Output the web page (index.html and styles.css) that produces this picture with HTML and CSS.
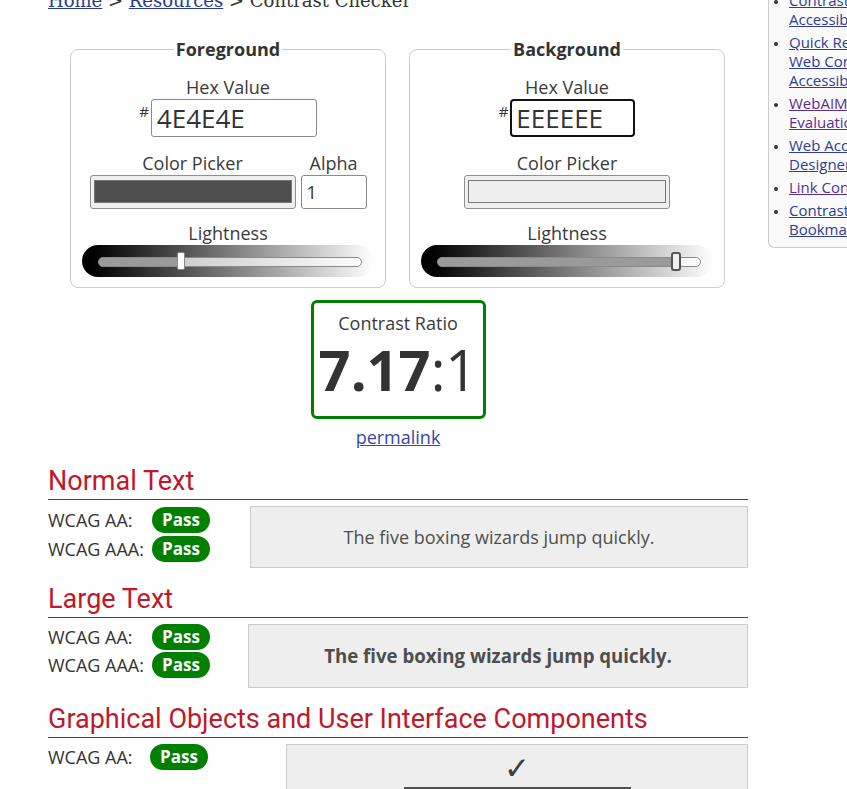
FILE: index.html
```html
<!DOCTYPE html>
<html lang="en">
<head>
<meta charset="utf-8">
<title>Contrast Checker</title>
<link rel="stylesheet" href="styles.css">
</head>
<body>
<div class="page">
  <main class="main">
    <p class="crumbs"><a href="#">Home</a> &gt; <a href="#">Resources</a> &gt; Contrast Checker</p>

    <div class="pickers">
      <fieldset class="picker">
        <legend>Foreground</legend>
        <div class="fs-body">
          <div class="lbl">Hex Value</div>
          <div class="hexrow">
            <span class="hash">#</span>
            <div class="hex">4E4E4E</div>
          </div>
          <div class="pickrow">
            <div class="col">
              <div class="lbl">Color Picker</div>
              <div class="swatch"><div class="swatch-in" style="background:#4e4e4e"></div></div>
            </div>
            <div class="col">
              <div class="lbl">Alpha</div>
              <div class="alpha">1</div>
            </div>
          </div>
          <div class="lbl">Lightness</div>
          <div class="slider">
            <div class="track">
              <div class="fill" style="width:31.4%"></div>
              <div class="thumb" style="left:31.4%"></div>
            </div>
          </div>
        </div>
      </fieldset>

      <fieldset class="picker">
        <legend>Background</legend>
        <div class="fs-body">
          <div class="lbl">Hex Value</div>
          <div class="hexrow">
            <span class="hash">#</span>
            <div class="hex hex-focus">EEEEEE</div>
          </div>
          <div class="pickrow">
            <div class="col">
              <div class="lbl">Color Picker</div>
              <div class="swatch"><div class="swatch-in" style="background:#eeeeee"></div></div>
            </div>
          </div>
          <div class="lbl">Lightness</div>
          <div class="slider">
            <div class="track">
              <div class="fill" style="width:90.9%"></div>
              <div class="thumb thumb-hover" style="left:90.9%"></div>
            </div>
          </div>
        </div>
      </fieldset>
    </div>

    <div class="ratio-wrap">
      <div class="ratio-box">
        <div class="ratio-label">Contrast Ratio</div>
        <div class="ratio-num"><b>7.17</b>:1</div>
      </div>
      <a class="permalink" href="#">permalink</a>
    </div>

    <section class="result first">
      <h2>Normal Text</h2>
      <div class="res-row">
        <div class="grades">
          <div class="grade"><span class="g-label">WCAG AA:</span><span class="pass">Pass</span></div>
          <div class="grade"><span class="g-label">WCAG AAA:</span><span class="pass">Pass</span></div>
        </div>
        <div class="sample">The five boxing wizards jump quickly.</div>
      </div>
    </section>

    <section class="result">
      <h2>Large Text</h2>
      <div class="res-row">
        <div class="grades grades-large">
          <div class="grade"><span class="g-label">WCAG AA:</span><span class="pass">Pass</span></div>
          <div class="grade"><span class="g-label">WCAG AAA:</span><span class="pass">Pass</span></div>
        </div>
        <div class="sample sample-large">The five boxing wizards jump quickly.</div>
      </div>
    </section>

    <section class="result">
      <h2>Graphical Objects and User Interface Components</h2>
      <div class="res-row">
        <div class="grades grades-ui">
          <div class="grade"><span class="g-label g-label-ui">WCAG AA:</span><span class="pass">Pass</span></div>
        </div>
        <div class="sample sample-ui">
          <div class="check">&#10003;</div>
          <div class="ui-bar"></div>
        </div>
      </div>
    </section>
  </main>

  <aside class="sidebar">
    <ul>
      <li><a href="#">Contrast and Color<br>Accessibility</a></li>
      <li><a href="#">Quick Reference:<br>Web Content<br>Accessibility Guidelines</a></li>
      <li><a class="visited" href="#">WebAIM WAVE<br>Evaluation Tool</a></li>
      <li><a href="#">Web Accessibility for<br>Designers</a></li>
      <li><a class="visited" href="#">Link Contrast Checker</a></li>
      <li><a href="#">Contrast Checker<br>Bookmarklet</a></li>
    </ul>
  </aside>
</div>
</body>
</html>
```

FILE: styles.css
```css
* { box-sizing: border-box; }
html, body { margin: 0; overflow: hidden; }
body {
  font-family: "Open Sans", "Liberation Sans", sans-serif;
  font-size: 18px;
  line-height: 24px;
  color: #333;
  background: #fff;
}
a { color: #2d3d98; }

.page {
  display: flex;
  gap: 20px;
  padding-left: 48px;
  margin-top: -11px;
}
.main { flex: 0 0 700px; width: 700px; }

.crumbs {
  margin: 0;
  font-family: "DejaVu Serif", "Liberation Serif", serif;
  font-size: 18px;
  line-height: 24px;
  color: #333;
}
.crumbs a { color: #2b3a93; }

/* pickers */
.pickers {
  display: flex;
  gap: 23px;
  margin-top: 24px;
  padding-left: 22px;
}
.picker {
  margin: 0;
  width: 316px;
  min-width: 0;
  border: 1px solid #ccc;
  border-radius: 8px;
  padding: 14px 10px 10px;
}
.picker legend {
  margin: 0 auto;
  padding: 0 2px;
  font-weight: 700;
  font-size: 18px;
  line-height: 24px;
  color: #333;
}
.fs-body {
  display: flex;
  flex-direction: column;
  align-items: center;
}
.lbl { line-height: 24px; color: #3a3a3a; }
.hexrow {
  display: flex;
  align-items: flex-start;
  margin-bottom: 14px;
}
.hash {
  font-size: 15px;
  line-height: 20px;
  margin: 2px 2px 0 0;
}
.hex {
  width: 166px;
  height: 38px;
  border: 1px solid #8a8a8a;
  border-radius: 3px;
  padding: 0 5px;
  font-size: 26px;
  line-height: 37px;
  color: #333;
  background: #fff;
}
.hex-focus {
  width: 125px;
  border: 2px solid #111;
  border-radius: 4px;
  padding: 0 4px;
  line-height: 35px;
}
.pickrow {
  display: flex;
  gap: 5px;
  margin-bottom: 12px;
}
.col {
  display: flex;
  flex-direction: column;
  align-items: center;
}
.swatch {
  width: 206px;
  height: 34px;
  padding: 4px 3px 5px;
  background: #efefef;
  border: 1px solid #8f8f8f;
  border-radius: 3px;
}
.swatch-in {
  height: 100%;
  border: 1px solid #777;
}
.alpha {
  width: 66px;
  height: 34px;
  border: 1px solid #8a8a8a;
  border-radius: 3px;
  padding: 0 5px;
  line-height: 32px;
  background: #fff;
  color: #333;
}

/* lightness slider */
.slider {
  position: relative;
  width: 292px;
  height: 32px;
  border-radius: 16px;
  background: linear-gradient(to right, #000 4%, #fff 100%);
}
.track {
  position: absolute;
  left: 16px;
  right: 12px;
  top: 12px;
  height: 10px;
  border: 1px solid #8a8a8a;
  border-radius: 5px;
  background: rgba(255, 255, 255, 0.72);
}
.fill {
  position: absolute;
  left: 0;
  top: 0;
  bottom: 0;
  background: #9a9a9a;
  border-radius: 4px 0 0 4px;
}
.thumb {
  position: absolute;
  top: -6px;
  width: 8px;
  height: 18px;
  transform: translateX(-50%);
  background: #fff;
  border: 1px solid #888;
  border-radius: 2px;
}
.thumb-hover {
  width: 10px;
  height: 19px;
  border: 2px solid #555;
  border-radius: 3px;
  background: #f0f0f0;
}

/* ratio */
.ratio-wrap {
  display: flex;
  flex-direction: column;
  align-items: center;
  margin-top: 12px;
}
.ratio-box {
  width: 175px;
  border: 3px solid #008000;
  border-radius: 6px;
  padding: 8px 0 12px;
  text-align: center;
}
.ratio-label { line-height: 24px; color: #3a3a3a; }
.ratio-num {
  font-size: 56px;
  line-height: 69px;
  color: #333;
}
.ratio-num b { font-weight: 700; }
.permalink {
  margin-top: 6px;
  line-height: 24px;
  color: #3547a8;
}

/* results */
.result { margin-top: 16px; }
.result.first { margin-top: 17px; }
.result h2 {
  margin: 0;
  font-family: Roboto, "Liberation Sans", sans-serif;
  font-weight: 400;
  font-size: 27px;
  line-height: 30px;
  color: #c0182a;
  padding-bottom: 3px;
  border-bottom: 1px solid #a31e26;
}
.res-row {
  display: flex;
  align-items: flex-start;
  margin-top: 6px;
}
.grades {
  flex: 0 0 202px;
  display: flex;
  flex-direction: column;
  gap: 3px;
  margin-top: 1px;
}
.grades-large { flex-basis: 200px; margin-top: 0; gap: 2px; }
.grades-ui { flex-basis: 238px; margin-top: 0; }
.grade {
  display: flex;
  align-items: center;
  height: 26px;
}
.g-label { width: 104px; line-height: 26px; }
.g-label-ui { width: 102px; }
.pass {
  width: 58px;
  height: 26px;
  border-radius: 13px;
  background: #008000;
  color: #fff;
  font-weight: 700;
  font-size: 17px;
  line-height: 26px;
  text-align: center;
}
.sample {
  flex: 1;
  background: #eee;
  border: 1px solid #ccc;
  padding: 18px;
  text-align: center;
  color: #4e4e4e;
  line-height: 24px;
}
.sample-large {
  font-weight: 700;
  font-size: 18.67px;
  line-height: 26px;
}
.sample-ui {
  padding: 8px 0 0;
  display: flex;
  flex-direction: column;
  align-items: center;
  height: 80px;
}
.check {
  font-family: "DejaVu Sans", sans-serif;
  font-size: 31px;
  line-height: 30px;
  color: #3f3f3f;
}
.ui-bar {
  margin-top: 4px;
  width: 227px;
  height: 30px;
  border-top: 3px solid #4e4e4e;
  border-left: 3px solid #4e4e4e;
  border-right: 3px solid #4e4e4e;
  background: #fff;
}

/* sidebar */
.sidebar {
  flex: 0 0 220px;
  align-self: flex-start;
  background: #fafafa;
  border-left: 1px solid #ccc;
  border-bottom: 1px solid #ccc;
  border-bottom-left-radius: 6px;
}
.sidebar ul {
  margin: 0;
  padding: 2px 0 8px 20px;
  font-size: 15px;
  line-height: 19px;
  white-space: nowrap;
}
.sidebar li { margin-bottom: 4px; }
.sidebar li:last-child { margin-bottom: 0; }
.sidebar li::marker { font-size: 12px; color: #333; }
.sidebar a { color: #2d3d98; }
.sidebar a.visited { color: #5b2f92; }
```
